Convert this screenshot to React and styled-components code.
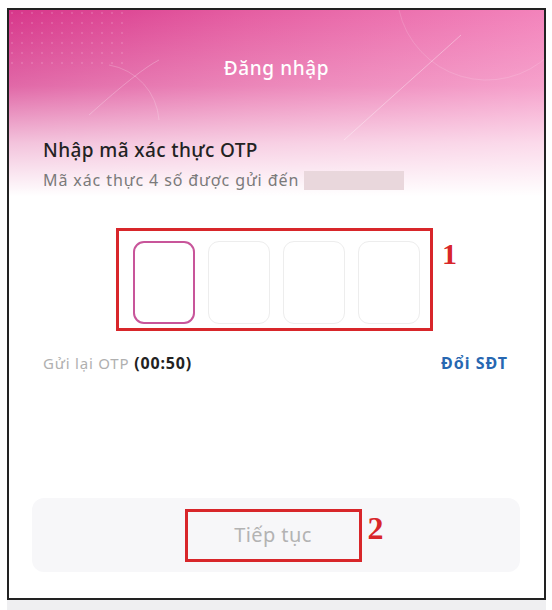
import styled, { createGlobalStyle } from "styled-components";

const GlobalStyle = createGlobalStyle`
    html, body {
        margin: 0;
        padding: 0;
        background: #ffffff;
    }
    body {
        font-family: "Noto Sans", "Open Sans", sans-serif;
    }
`;

// styles
const Page = styled.div`
    width: 552px;
    height: 610px;
    padding-top: 8px;
    box-sizing: border-box;
    display: flex;
    flex-direction: column;
    align-items: flex-start;
    padding-left: 7px;
`;

const Frame = styled.div`
    width: 539px;
    height: 592px;
    box-sizing: border-box;
    border: 2px solid #222;
    background: #ffffff;
    display: flex;
    flex-direction: column;
    overflow: hidden;
`;

const BottomStrip = styled.div`
    width: 539px;
    height: 10px;
    background: #efeff1;
`;

const Header = styled.header`
    position: relative;
    height: 190px;
    padding: 46px 0 0 34px;
    box-sizing: border-box;
    background:
        linear-gradient(
            180deg,
            rgba(255, 255, 255, 0) 0%,
            rgba(255, 255, 255, 0.25) 40%,
            rgba(255, 255, 255, 0.7) 70%,
            #ffffff 98%
        ),
        linear-gradient(90deg, #d7368a 0%, #e55ea2 45%, #f383bb 100%);
`;

const Decor = styled.svg`
    position: absolute;
    inset: 0;
    pointer-events: none;
`;

const Title = styled.h1`
    position: relative;
    margin: 0 0 58px -34px;
    text-align: center;
    font-size: 19px;
    line-height: 24px;
    font-weight: 500;
    letter-spacing: 0.6px;
    color: #ffffff;
`;

const Heading = styled.h2`
    position: relative;
    margin: 0 0 7px;
    font-size: 19px;
    line-height: 24px;
    font-weight: 500;
    letter-spacing: 0.4px;
    color: #222;
`;

const SubRow = styled.div`
    position: relative;
    display: flex;
    align-items: center;
    gap: 5px;
    font-size: 16px;
    line-height: 22px;
    letter-spacing: 0.9px;
    color: #7a7a7a;
`;

const Redacted = styled.span`
    display: inline-block;
    width: 100px;
    height: 19px;
    background: #e9d7dc;
`;

const OtpRow = styled.div`
    display: flex;
    justify-content: center;
    margin-top: 28px;
    padding-right: 4px;
`;

const Annotated = styled.div`
    position: relative;
    display: flex;
    border: 3px solid #d8262a;
`;

const OtpGroup = styled(Annotated)`
    gap: 13px;
    padding: 10px 10px 4px 14px;
`;

const Mark = styled.span`
    position: absolute;
    left: calc(100% + ${(p) => p.offset}px);
    top: ${(p) => p.top}px;
    font-family: "Liberation Serif", "DejaVu Serif", serif;
    font-weight: 700;
    font-size: ${(p) => p.size}px;
    line-height: 1;
    color: #d8262a;
`;

const OtpBox = styled.div`
    width: 62px;
    height: 83px;
    box-sizing: border-box;
    border-radius: 11px;
    border: ${(p) => (p.active ? "2px solid #c8559a" : "1.5px solid #ededed")};
    background: #ffffff;
`;

const ResendRow = styled.div`
    display: flex;
    justify-content: space-between;
    align-items: center;
    margin-top: 22px;
    padding: 0 36px 0 34px;
    font-size: 15px;
    line-height: 20px;
    letter-spacing: 0.8px;
`;

const Resend = styled.span`
    color: #b0b0b0;
`;

const Timer = styled.b`
    color: #222;
    font-weight: 700;
    font-size: 16px;
    margin-left: 5px;
`;

const ChangePhone = styled.a`
    color: #2767b1;
    font-weight: 700;
    font-size: 16px;
    letter-spacing: 1px;
`;

const Spacer = styled.div`
    flex: 1;
`;

const ButtonBar = styled.div`
    margin: 0 24px 26px 23px;
    height: 74px;
    border-radius: 12px;
    background: #f7f7f9;
    display: flex;
    align-items: center;
    justify-content: center;
    padding-right: 6px;
`;

const NextButton = styled(Annotated)`
    width: 177px;
    height: 53px;
    box-sizing: border-box;
    align-items: center;
    justify-content: center;
    font-size: 20px;
    letter-spacing: 0.4px;
    color: #b3b3b3;
    padding-bottom: 2px;
`;

function App() {
    return (
        <>
            <GlobalStyle />
            <Page>
                <Frame>
                    <Header>
                        <Decor width="535" height="190" viewBox="0 0 535 190">
                            <defs>
                                <pattern id="dots" width="10" height="10" patternUnits="userSpaceOnUse">
                                    <circle cx="3" cy="3" r="1" fill="rgba(255,255,255,0.18)" />
                                </pattern>
                            </defs>
                            <rect x="0" y="0" width="120" height="60" fill="url(#dots)" />
                            <path d="M80 105 Q 130 60 150 50" stroke="rgba(255,255,255,0.25)" strokeWidth="1" fill="none" />
                            <path d="M100 55 A 60 60 0 0 1 150 110" stroke="rgba(255,255,255,0.2)" strokeWidth="1" fill="none" />
                            <path d="M335 130 L 452 25" stroke="rgba(255,255,255,0.35)" strokeWidth="1" fill="none" />
                            <path d="M390 0 A 90 90 0 0 0 540 45" stroke="rgba(255,255,255,0.15)" strokeWidth="1" fill="none" />
                        </Decor>
                        <Title>Đăng nhập</Title>
                        <Heading>Nhập mã xác thực OTP</Heading>
                        <SubRow>
                            Mã xác thực 4 số được gửi đến
                            <Redacted />
                        </SubRow>
                    </Header>
                    <OtpRow>
                        <OtpGroup>
                            <OtpBox active />
                            <OtpBox />
                            <OtpBox />
                            <OtpBox />
                            <Mark offset={12} top={8} size={30}>1</Mark>
                        </OtpGroup>
                    </OtpRow>
                    <ResendRow>
                        <span>
                            <Resend>Gửi lại OTP</Resend>
                            <Timer>(00:50)</Timer>
                        </span>
                        <ChangePhone>Đổi SĐT</ChangePhone>
                    </ResendRow>
                    <Spacer />
                    <ButtonBar>
                        <NextButton>
                            Tiếp tục
                            <Mark offset={9} top={0} size={32}>2</Mark>
                        </NextButton>
                    </ButtonBar>
                </Frame>
                <BottomStrip />
            </Page>
        </>
    );
}

export default App;
